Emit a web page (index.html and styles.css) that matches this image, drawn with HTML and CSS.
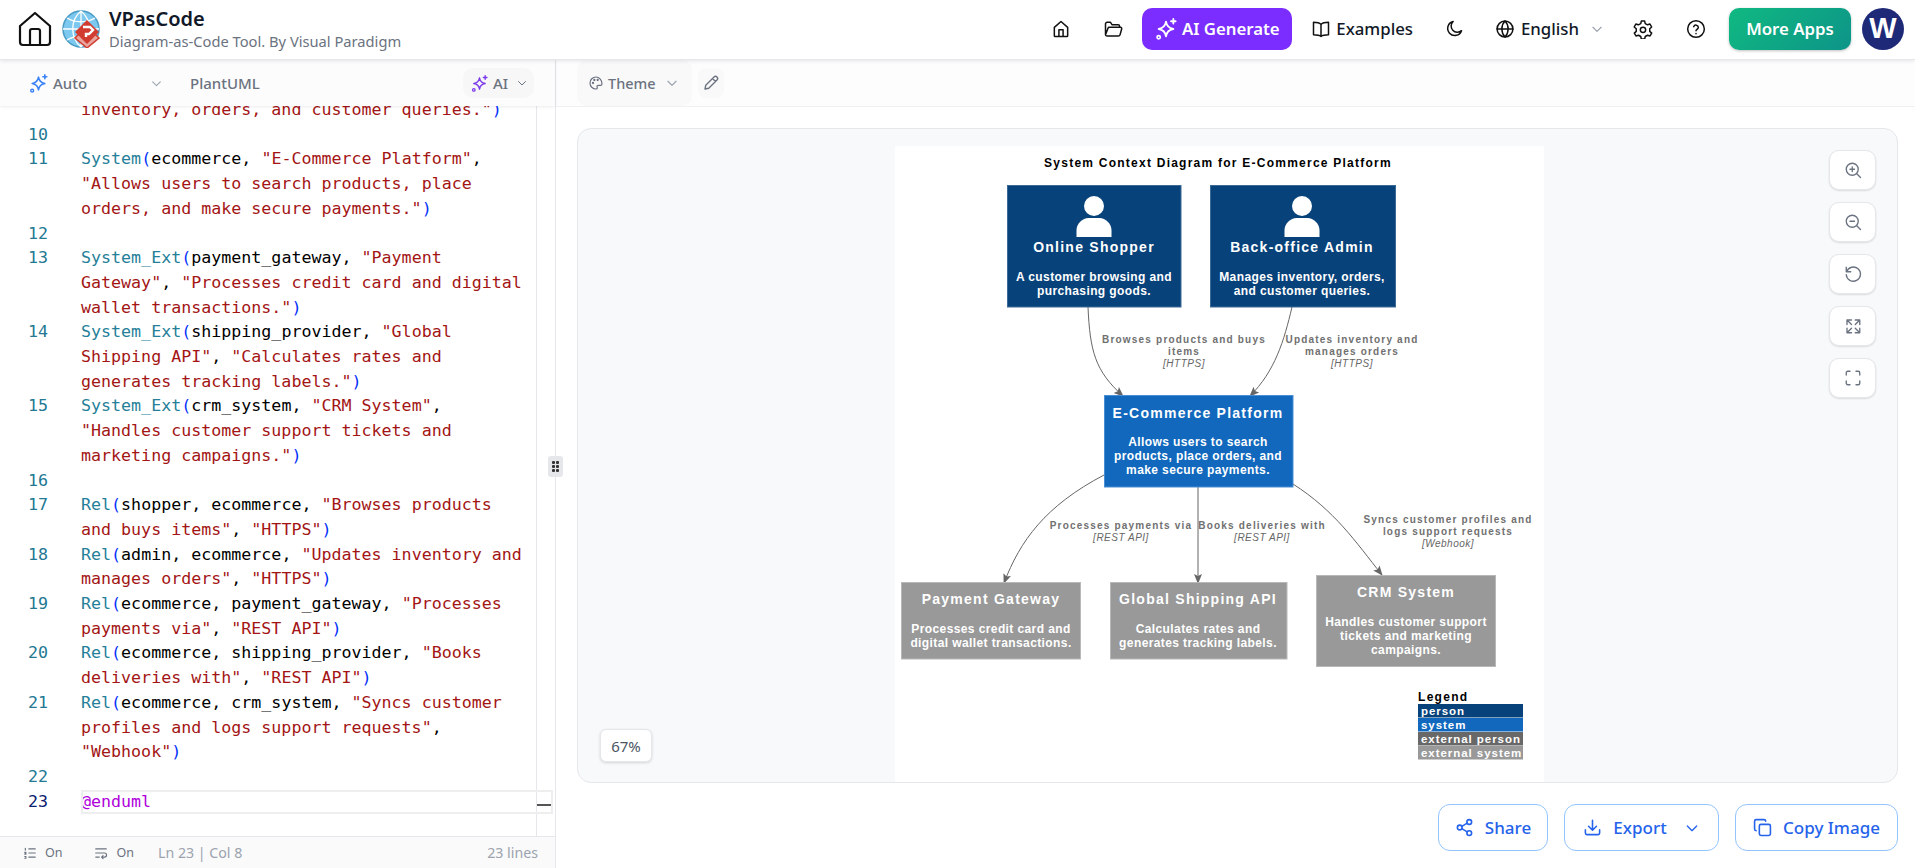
FILE: index.html
```html
<!DOCTYPE html>
<html lang="en">
<head>
<meta charset="UTF-8">
<meta name="viewport" content="width=device-width, initial-scale=1.0">
<title>VPasCode</title>
<link rel="stylesheet" href="styles.css">
</head>
<body>
<svg class="defs" width="0" height="0">
    <symbol id="sparkle" viewBox="0 0 24 24"><path d="M12 4c.8 4.800 3 7.200 8 8-5 .8-7.200 3.200-8 8-.8-4.800-3-7.200-8-8 5-.8 7.200-3.200 8-8z" fill="none" stroke="currentColor" stroke-width="2" stroke-linejoin="round"/><path d="M20 1v5M17.500 3.500h5" fill="none" stroke="currentColor" stroke-width="2" stroke-linecap="round"/><circle cx="4" cy="21" r="1.800" fill="none" stroke="currentColor" stroke-width="1.800"/></symbol>
    <symbol id="chevron" viewBox="0 0 24 24"><path d="M5 9l7 7 7-7" fill="none" stroke="currentColor" stroke-width="2" stroke-linecap="round" stroke-linejoin="round"/></symbol>
</svg>

<header class="topbar">
    <div class="brand">
        <svg class="brand-home" viewBox="0 0 34 36"><path d="M2 15L17 2l15 13v16a3 3 0 0 1-3 3H5a3 3 0 0 1-3-3z M12 34V20a2 2 0 0 1 2-2h6a2 2 0 0 1 2 2v14" fill="none" stroke="#111" stroke-width="2.200" stroke-linejoin="round"/></svg>
        <svg class="brand-logo" viewBox="0 0 38 38">
            <circle cx="19" cy="19" r="18" fill="#7cc8ee" stroke="#4a9cc4" stroke-width="1.500"/>
            <path d="M1 19h36M19 1v36M5 8c8 5 20 5 28 0M5 30c8-5 20-5 28 0M19 1c-11 9-11 27 0 36M19 1c11 9 11 27 0 36" fill="none" stroke="#fff" stroke-width="1.300"/>
            <path d="M25 16l12 12-12 10-12-10z" fill="#e8a59d" stroke="#d23c30" stroke-width="1.500"/>
            <path d="M25 10l12 12-12 12-12-12z" fill="#d23c30"/>
            <path d="M21 17h7l3 3-4 4h-3v3" fill="none" stroke="#fff" stroke-width="2.400"/>
        </svg>
        <div class="brand-text">
            <div class="brand-name">VPasCode</div>
            <div class="brand-sub">Diagram-as-Code Tool. By Visual Paradigm</div>
        </div>
    </div>
    <nav class="nav">
        <span class="nav-icon nav-home"><svg viewBox="0 0 24 24"><path d="M4 10l8-7 8 7v10a1 1 0 0 1-1 1H5a1 1 0 0 1-1-1z M9.500 21v-8h5v8"/></svg></span>
        <span class="nav-icon nav-folder"><svg viewBox="0 0 24 24"><path d="M3 19V6a2 2 0 0 1 2-2h4l2 3h7a2 2 0 0 1 2 2v1 M3 19l3-8a1.500 1.500 0 0 1 1.400-1H21a1.500 1.500 0 0 1 1.400 2l-2 7a2 2 0 0 1-2 1.500H5a2 2 0 0 1-2-1.500z"/></svg></span>
        <span class="btn-ai"><svg><use href="#sparkle"/></svg>AI Generate</span>
        <span class="nav-link nav-examples"><svg viewBox="0 0 24 24"><path d="M12 6.500C10 4.500 7 4 3 4v15c4 0 7 .5 9 2 2-1.500 5-2 9-2V4c-4 0-7 .5-9 2.500z M12 6.500V21"/></svg>Examples</span>
        <span class="nav-icon nav-moon"><svg viewBox="0 0 24 24"><path d="M11 3a8.500 8.500 0 1 0 10 11 7 7 0 0 1-10-11z"/></svg></span>
        <span class="nav-link nav-lang"><svg viewBox="0 0 24 24"><circle cx="12" cy="12" r="9.500"/><path d="M2.500 12h19M12 2.500c-5 5-5 14 0 19M12 2.500c5 5 5 14 0 19"/></svg>English<svg class="lang-chevron"><use href="#chevron"/></svg></span>
        <span class="nav-icon nav-gear"><svg viewBox="0 0 24 24"><path d="M10 2.500h4l.7 3 2.700 1.500 3-.9 2 3.500-2.300 2.100v3.100l2.300 2.100-2 3.500-3-.9-2.700 1.500-.7 3h-4l-.7-3-2.700-1.500-3 .9-2-3.500 2.300-2.100v-3.100L1.400 9.600l2-3.500 3 .9L9.300 5.500z"/><circle cx="12" cy="13" r="3.200"/></svg></span>
        <span class="nav-icon nav-help"><svg viewBox="0 0 24 24"><circle cx="12" cy="12" r="10"/><path d="M9.200 9.200a2.900 2.900 0 0 1 5.600 1c0 2-2.800 2.500-2.800 4"/><path d="M12 17.500v.100"/></svg></span>
        <span class="btn-apps">More Apps</span>
        <span class="avatar">W</span>
    </nav>
</header>

<main class="workspace">
    <section class="editor">
        <div class="editor-bar">
            <svg class="auto-icon"><use href="#sparkle"/></svg>
            <span class="auto-label">Auto</span>
            <svg class="auto-chevron"><use href="#chevron"/></svg>
            <span class="lang-label">PlantUML</span>
            <span class="ai-pill"><svg class="ai-icon"><use href="#sparkle"/></svg>AI<svg class="ai-chevron"><use href="#chevron"/></svg></span>
        </div>
        <div class="code">
            <div class="code-scroll">
                <div class="line"><span class="num"></span><span class="txt"><i class="s">inventory, orders, and customer queries."</i><i class="p">)</i></span></div>
                <div class="line"><span class="num">10</span><span class="txt"></span></div>
                <div class="line"><span class="num">11</span><span class="txt"><i class="k">System</i><i class="p">(</i>ecommerce, <i class="s">"E-Commerce Platform"</i>,<br><i class="s">"Allows users to search products, place<br>orders, and make secure payments."</i><i class="p">)</i></span></div>
                <div class="line"><span class="num">12</span><span class="txt"></span></div>
                <div class="line"><span class="num">13</span><span class="txt"><i class="k">System_Ext</i><i class="p">(</i>payment_gateway, <i class="s">"Payment<br>Gateway"</i>, <i class="s">"Processes credit card and digital<br>wallet transactions."</i><i class="p">)</i></span></div>
                <div class="line"><span class="num">14</span><span class="txt"><i class="k">System_Ext</i><i class="p">(</i>shipping_provider, <i class="s">"Global<br>Shipping API"</i>, <i class="s">"Calculates rates and<br>generates tracking labels."</i><i class="p">)</i></span></div>
                <div class="line"><span class="num">15</span><span class="txt"><i class="k">System_Ext</i><i class="p">(</i>crm_system, <i class="s">"CRM System"</i>,<br><i class="s">"Handles customer support tickets and<br>marketing campaigns."</i><i class="p">)</i></span></div>
                <div class="line"><span class="num">16</span><span class="txt"></span></div>
                <div class="line"><span class="num">17</span><span class="txt"><i class="k">Rel</i><i class="p">(</i>shopper, ecommerce, <i class="s">"Browses products<br>and buys items"</i>, <i class="s">"HTTPS"</i><i class="p">)</i></span></div>
                <div class="line"><span class="num">18</span><span class="txt"><i class="k">Rel</i><i class="p">(</i>admin, ecommerce, <i class="s">"Updates inventory and<br>manages orders"</i>, <i class="s">"HTTPS"</i><i class="p">)</i></span></div>
                <div class="line"><span class="num">19</span><span class="txt"><i class="k">Rel</i><i class="p">(</i>ecommerce, payment_gateway, <i class="s">"Processes<br>payments via"</i>, <i class="s">"REST API"</i><i class="p">)</i></span></div>
                <div class="line"><span class="num">20</span><span class="txt"><i class="k">Rel</i><i class="p">(</i>ecommerce, shipping_provider, <i class="s">"Books<br>deliveries with"</i>, <i class="s">"REST API"</i><i class="p">)</i></span></div>
                <div class="line"><span class="num">21</span><span class="txt"><i class="k">Rel</i><i class="p">(</i>ecommerce, crm_system, <i class="s">"Syncs customer<br>profiles and logs support requests"</i>,<br><i class="s">"Webhook"</i><i class="p">)</i></span></div>
                <div class="line"><span class="num">22</span><span class="txt"></span></div>
                <div class="line line-current"><span class="num">23</span><span class="txt"><i class="d">@enduml</i></span></div>
            </div>
            <div class="ruler"><span class="ruler-mark"></span></div>
        </div>
        <div class="status">
            <svg class="status-icon" viewBox="0 0 24 24"><path d="M10 5h11M10 12h11M10 19h11M4 4v3M3 11h2v1l-2 2h2M3 18h2v3H3"/></svg>
            <span class="status-on">On</span>
            <svg class="status-icon status-wrap" viewBox="0 0 24 24"><path d="M3 5h18M3 12h15a3 3 0 0 1 0 7h-5M15.500 16.500L13 19l2.500 2.500M3 19h6"/></svg>
            <span class="status-on">On</span>
            <span class="status-pos">Ln 23 | Col 8</span>
            <span class="status-lines">23 lines</span>
        </div>
    </section>

    <section class="preview">
        <div class="preview-bar">
            <span class="theme-btn"><svg viewBox="0 0 24 24"><path d="M12 3a9 9 0 1 0 0 18c1.500 0 2-1 2-2s-1-1.500-.5-2.500 1.500-1 3-1H19a2.500 2.500 0 0 0 2-2.500c0-5-4-10-9-10z"/><circle cx="7.500" cy="12" r=".8"/><circle cx="9.500" cy="7.500" r=".8"/><circle cx="14.500" cy="7.500" r=".8"/></svg>Theme<svg class="theme-chevron"><use href="#chevron"/></svg></span>
            <span class="pencil-btn"><svg class="pencil" viewBox="0 0 24 24"><path d="M4 20l1-5L16 4a2.100 2.100 0 0 1 4 4L9 19z M14 6l4 4"/></svg></span>
        </div>
        <div class="canvas-wrap">
            <div class="canvas">
                <svg class="diagram" viewBox="0 0 649 637">
                    <defs>
                        <marker id="arrow" viewBox="0 0 10 10" refX="9" refY="5" markerWidth="10" markerHeight="10" orient="auto"><path d="M0 1l10 4-10 4 2-4z" fill="#666"/></marker>
                    </defs>
                    <text class="d-title" x="323" y="21">System Context Diagram for E-Commerce Platform</text>

                    <g class="edges">
                        <path d="M193 161C195 205 200 225 228 250" marker-end="url(#arrow)"/>
                        <path d="M397 161C389 195 380 225 355 250" marker-end="url(#arrow)"/>
                        <path d="M209 329C150 360 125 395 109 437" marker-end="url(#arrow)"/>
                        <path d="M303 341V437" marker-end="url(#arrow)"/>
                        <path d="M398 338C440 365 460 395 487 429" marker-end="url(#arrow)"/>
                    </g>

                    <rect class="b-person" x="112.500" y="39.500" width="173.500" height="121.500"/>
                    <rect class="b-person" x="315.500" y="39.500" width="185" height="121.500"/>
                    <rect class="b-system" x="209.500" y="249.500" width="188.500" height="91.500"/>
                    <rect class="b-ext" x="6.500" y="436.500" width="179" height="76.500"/>
                    <rect class="b-ext" x="215.500" y="436.500" width="176.500" height="76.500"/>
                    <rect class="b-ext" x="421.500" y="429.500" width="179" height="91"/>

                    <circle class="person" cx="199" cy="60" r="10"/>
                    <path class="person" d="M181.500 91V84c0-6 6-12 12-12h11c6 0 12 6 12 12v7z"/>
                    <circle class="person" cx="407" cy="60" r="10"/>
                    <path class="person" d="M389.500 91V84c0-6 6-12 12-12h11c6 0 12 6 12 12v7z"/>

                    <text class="d-name" x="199" y="106">Online Shopper</text>
                    <text class="d-desc" x="199" y="135">A customer browsing and</text>
                    <text class="d-desc" x="199" y="149">purchasing goods.</text>

                    <text class="d-name" x="407" y="106">Back-office Admin</text>
                    <text class="d-desc" x="407" y="135">Manages inventory, orders,</text>
                    <text class="d-desc" x="407" y="149">and customer queries.</text>

                    <text class="d-name" x="303" y="272">E-Commerce Platform</text>
                    <text class="d-desc" x="303" y="300">Allows users to search</text>
                    <text class="d-desc" x="303" y="314">products, place orders, and</text>
                    <text class="d-desc" x="303" y="328">make secure payments.</text>

                    <text class="d-name" x="96" y="458">Payment Gateway</text>
                    <text class="d-desc" x="96" y="487">Processes credit card and</text>
                    <text class="d-desc" x="96" y="501">digital wallet transactions.</text>

                    <text class="d-name" x="303" y="458">Global Shipping API</text>
                    <text class="d-desc" x="303" y="487">Calculates rates and</text>
                    <text class="d-desc" x="303" y="501">generates tracking labels.</text>

                    <text class="d-name" x="511" y="451">CRM System</text>
                    <text class="d-desc" x="511" y="480">Handles customer support</text>
                    <text class="d-desc" x="511" y="494">tickets and marketing</text>
                    <text class="d-desc" x="511" y="508">campaigns.</text>

                    <text class="d-edge" x="289" y="197">Browses products and buys</text>
                    <text class="d-edge" x="289" y="209">items</text>
                    <text class="d-tech" x="289" y="221">[HTTPS]</text>

                    <text class="d-edge" x="457" y="197">Updates inventory and</text>
                    <text class="d-edge" x="457" y="209">manages orders</text>
                    <text class="d-tech" x="457" y="221">[HTTPS]</text>

                    <text class="d-edge" x="226" y="383">Processes payments via</text>
                    <text class="d-tech" x="226" y="395">[REST API]</text>

                    <text class="d-edge" x="367" y="383">Books deliveries with</text>
                    <text class="d-tech" x="367" y="395">[REST API]</text>

                    <text class="d-edge" x="553" y="377">Syncs customer profiles and</text>
                    <text class="d-edge" x="553" y="389">logs support requests</text>
                    <text class="d-tech" x="553" y="401">[Webhook]</text>

                    <text class="d-legend" x="523" y="555">Legend</text>
                    <rect x="523" y="558" width="105" height="13.500" fill="#08427b"/>
                    <rect x="523" y="572" width="105" height="13.500" fill="#1168bd"/>
                    <rect x="523" y="586" width="105" height="13.500" fill="#686868"/>
                    <rect x="523" y="600" width="105" height="13.500" fill="#999"/>
                    <text class="d-key" x="526" y="569">person</text>
                    <text class="d-key" x="526" y="583">system</text>
                    <text class="d-key" x="526" y="597">external person</text>
                    <text class="d-key" x="526" y="611">external system</text>
                </svg>
                <div class="zoom-tools">
                    <span class="tool"><svg viewBox="0 0 24 24"><circle cx="11" cy="11" r="8"/><path d="M8 11h6M11 8v6M17 17l5 5"/></svg></span>
                    <span class="tool"><svg viewBox="0 0 24 24"><circle cx="11" cy="11" r="8"/><path d="M8 11h6M17 17l5 5"/></svg></span>
                    <span class="tool"><svg viewBox="0 0 24 24"><path d="M3 3v6h6M3.500 9A9.500 9.500 0 1 1 3 13"/></svg></span>
                    <span class="tool"><svg viewBox="0 0 24 24"><path d="M4 10V4h6M4 4l6 6M15 4h6v6M21 4l-6 6M4 15v6h6M4 21l6-6M15 21h6v-6M21 21l-6-6"/></svg></span>
                    <span class="tool"><svg viewBox="0 0 24 24"><path d="M3 8V5a2 2 0 0 1 2-2h3M16 3h3a2 2 0 0 1 2 2v3M21 16v3a2 2 0 0 1-2 2h-3M8 21H5a2 2 0 0 1-2-2v-3"/></svg></span>
                </div>
                <span class="zoom-pct">67%</span>
            </div>
        </div>
        <div class="actions">
            <span class="action action-share"><svg viewBox="0 0 24 24"><circle cx="18" cy="5" r="3"/><circle cx="6" cy="12" r="3"/><circle cx="18" cy="19" r="3"/><path d="M8.600 10.500l6.800-4M8.600 13.500l6.800 4"/></svg>Share</span>
            <span class="action action-export"><svg viewBox="0 0 24 24"><path d="M12 3v12M7 10.500l5 5 5-5M3 15v4a2 2 0 0 0 2 2h14a2 2 0 0 0 2-2v-4"/></svg>Export<svg class="export-chevron"><use href="#chevron"/></svg></span>
            <span class="action action-copy"><svg viewBox="0 0 24 24"><rect x="8" y="8" width="14" height="14" rx="2"/><path d="M4 16a2 2 0 0 1-2-2V4a2 2 0 0 1 2-2h10a2 2 0 0 1 2 2"/></svg>Copy Image</span>
        </div>
    </section>
    <span class="splitter"><i></i><i></i><i></i><i></i><i></i><i></i></span>
</main>
</body>
</html>
```

FILE: styles.css
```css
* {
    box-sizing: border-box;
}

html, body {
    margin: 0;
    height: 100%;
    overflow: hidden;
}

body {
    font-family: "Noto Sans", Arial, sans-serif;
    background-color: #fff;
    color: #111827;
    display: flex;
    flex-direction: column;
}

.defs {
    position: absolute;
}

/* top bar */
.topbar {
    height: 60px;
    flex: none;
    display: flex;
    align-items: center;
    justify-content: space-between;
    border-bottom: 1px solid #e5e7eb;
    box-shadow: 0 1px 4px rgba(0, 0, 0, 0.1);
    position: relative;
    z-index: 2;
    background-color: #fff;
    padding: 0 11px 2px 18px;
}

.brand {
    display: flex;
    align-items: center;
}

.brand-home {
    width: 34px;
    height: 36px;
    margin-right: 10px;
}

.brand-logo {
    width: 38px;
    height: 38px;
    margin-right: 9px;
}

.brand-name {
    font-size: 20px;
    font-weight: 600;
    line-height: 25px;
    color: #111827;
}

.brand-sub {
    font-size: 14.700px;
    line-height: 20px;
    color: #6b7280;
}

.nav {
    display: flex;
    align-items: center;
}

.nav svg {
    fill: none;
    stroke: #111;
    stroke-width: 1.8;
    stroke-linecap: round;
    stroke-linejoin: round;
}

.nav-icon {
    display: flex;
}

.nav-icon svg {
    width: 20px;
    height: 20px;
}

.nav-home {
    margin-right: 32px;
}

.nav-folder {
    margin-right: 19px;
}

.btn-ai {
    width: 150px;
    height: 42px;
    display: flex;
    align-items: center;
    justify-content: center;
    gap: 5px;
    border-radius: 10px;
    background-color: #7b2cff;
    color: #fff;
    font-size: 16.800px;
    font-weight: 600;
    margin-right: 19px;
}

.nav .btn-ai svg {
    width: 22px;
    height: 24px;
    stroke: none;
    color: #fff;
}

.nav-link {
    display: flex;
    align-items: center;
    font-size: 16.800px;
    font-weight: 500;
    color: #111827;
}

.nav-link svg {
    width: 20px;
    height: 20px;
    margin-right: 5px;
}

.nav-examples {
    margin-right: 31px;
}

.nav-moon {
    margin-right: 31px;
}

.nav-lang {
    margin-right: 29px;
}

.nav-lang svg {
    margin-right: 6px;
}

.nav .lang-chevron {
    width: 14px;
    height: 14px;
    margin: 0 0 0 11px;
    color: #9ca3af;
    stroke: none;
}

.nav-gear {
    margin-right: 33px;
}

.nav-help {
    margin-right: 23px;
}

.btn-apps {
    width: 122px;
    height: 42px;
    display: flex;
    align-items: center;
    justify-content: center;
    border-radius: 10px;
    background: linear-gradient(135deg, #10b981, #0d9488);
    box-shadow: 0 1px 3px rgba(0, 0, 0, 0.25);
    color: #fff;
    font-size: 16.800px;
    font-weight: 600;
    margin-right: 11px;
}

.avatar {
    width: 42px;
    height: 42px;
    border-radius: 50%;
    background-color: #1e2a78;
    color: #fff;
    display: flex;
    align-items: center;
    justify-content: center;
    font-family: "Liberation Sans", Arial, sans-serif;
    font-size: 29px;
    font-weight: 700;
}

.workspace {
    flex: 1;
    min-height: 0;
    display: flex;
    position: relative;
}

/* editor */
.editor {
    width: 556px;
    flex: none;
    display: flex;
    flex-direction: column;
    border-right: 1px solid #e5e7eb;
}

.editor-bar {
    height: 46px;
    flex: none;
    display: flex;
    align-items: center;
    padding: 0 21px 0 29px;
    background-color: #fcfcfc;
    color: #6b7280;
    font-size: 15px;
    font-weight: 500;
    box-shadow: 0 1px 3px rgba(0, 0, 0, 0.08);
    position: relative;
    z-index: 1;
}

.editor-bar svg {
    flex: none;
}

.auto-icon {
    width: 19px;
    height: 21px;
    color: #3b82f6;
    margin-right: 5px;
}

.auto-label {
    width: 97px;
}

.auto-chevron {
    width: 13px;
    height: 13px;
    color: #9ca3af;
    margin-right: 27px;
}

.ai-pill {
    margin-left: auto;
    width: 71px;
    height: 30px;
    display: flex;
    align-items: center;
    padding-left: 8px;
    border-radius: 10px;
    background-color: #f7f7f8;
}

.ai-icon {
    width: 17px;
    height: 19px;
    color: #7c3aed;
    margin-right: 5px;
}

.ai-chevron {
    width: 12px;
    height: 12px;
    margin-left: 8px;
}

.code {
    flex: 1;
    min-height: 0;
    display: flex;
    overflow: hidden;
}

.code-scroll {
    flex: 1;
    margin-top: -8px;
    font-family: "DejaVu Sans Mono", "Liberation Mono", monospace;
    font-size: 16.650px;
    line-height: 24.700px;
    color: #000;
}

.line {
    display: flex;
}

.num {
    width: 81px;
    flex: none;
    padding-left: 28px;
    color: #237893;
}

.txt {
    flex: 1;
    min-height: 24.700px;
}

.txt i {
    font-style: normal;
}

.k {
    color: #267f99;
}

.p {
    color: #0431fa;
}

.s {
    color: #a31515;
}

.d {
    color: #af00db;
}

.line-current .num {
    color: #0b216f;
}

.line-current .txt {
    outline: 2px solid #eeeeee;
    outline-offset: -2px;
    margin-right: -17px;
    position: relative;
    z-index: 1;
}

.ruler {
    width: 19px;
    flex: none;
    border-left: 1px solid #e5e7eb;
    position: relative;
}

.ruler-mark {
    position: absolute;
    left: 0;
    right: 2px;
    top: 698px;
    height: 2px;
    background-color: #555;
}

.status {
    height: 32px;
    flex: none;
    display: flex;
    align-items: center;
    padding: 0 17px 0 23px;
    border-top: 1px solid #e5e7eb;
    background-color: #fafafa;
    color: #6b7280;
    font-size: 14.200px;
}

.status-icon {
    width: 14px;
    height: 14px;
    fill: none;
    stroke: #6b7280;
    stroke-width: 2;
    stroke-linecap: round;
    stroke-linejoin: round;
    margin-right: 8px;
}

.status-wrap {
    margin-left: 31px;
    margin-right: 9px;
}

.status-on {
    font-size: 12.500px;
}

.status-pos {
    margin-left: 24px;
    color: #9ca3af;
}

.status-lines {
    margin-left: auto;
    color: #9ca3af;
}

/* preview */
.preview {
    flex: 1;
    min-width: 0;
    display: flex;
    flex-direction: column;
}

.preview-bar {
    height: 47px;
    flex: none;
    display: flex;
    align-items: center;
    padding-left: 21px;
    background-color: #fdfdfd;
    border-bottom: 1px solid #f0f0f0;
}

.theme-btn {
    width: 115px;
    height: 46px;
    display: flex;
    align-items: center;
    padding-left: 11px;
    background-color: #f9f9fa;
    color: #6b7280;
    font-size: 14.500px;
    font-weight: 500;
    border-radius: 10px;
}

.theme-btn svg,
.pencil {
    fill: none;
    stroke: #6b7280;
    stroke-width: 1.8;
    stroke-linecap: round;
    stroke-linejoin: round;
}

.theme-btn svg {
    width: 16px;
    height: 16px;
    margin-right: 4px;
}

.theme-btn .theme-chevron {
    width: 14px;
    height: 14px;
    margin: 0 0 0 9px;
    stroke: none;
    color: #9ca3af;
}

.pencil-btn {
    width: 26px;
    height: 30px;
    margin-left: 6px;
    display: flex;
    align-items: center;
    justify-content: center;
    background-color: #f9f9fa;
    border-radius: 8px;
}

.pencil {
    width: 18px;
    height: 18px;
}

.canvas-wrap {
    flex: 1;
    min-height: 0;
    padding: 21px 17px 0 21px;
}

.canvas {
    height: 100%;
    border: 1px solid #e5e7eb;
    border-radius: 14px;
    background-color: #f8f9fb;
    position: relative;
    overflow: hidden;
    padding: 17px 0 0 317px;
}

.diagram {
    display: block;
    width: 649px;
    height: 637px;
    background-color: #fff;
}

.diagram text {
    font-family: "Liberation Sans", Arial, sans-serif;
    text-anchor: middle;
}

.d-title {
    font-size: 12px;
    font-weight: 700;
    letter-spacing: 1.240px;
    fill: #000;
}

.edges path {
    fill: none;
    stroke: #666;
    stroke-width: 1;
}

.b-person {
    fill: #08427b;
    stroke: #3c6a97;
}

.b-system {
    fill: #1168bd;
    stroke: #4a8fd3;
}

.b-ext {
    fill: #999;
    stroke: #b8b8b8;
}

.person {
    fill: #fff;
}

.d-name {
    font-size: 14px;
    font-weight: 700;
    letter-spacing: 1.250px;
    fill: #fff;
}

.d-desc {
    font-size: 12px;
    font-weight: 700;
    letter-spacing: 0.400px;
    fill: #fff;
}

.d-edge {
    font-size: 10px;
    font-weight: 700;
    letter-spacing: 1.200px;
    fill: #707070;
}

.d-tech {
    font-size: 10px;
    font-style: italic;
    letter-spacing: 0.500px;
    fill: #666;
}

.diagram .d-legend,
.diagram .d-key {
    text-anchor: start;
}

.d-legend {
    font-size: 12px;
    font-weight: 700;
    letter-spacing: 1.300px;
    fill: #000;
}

.d-key {
    font-size: 11.500px;
    font-weight: 700;
    letter-spacing: 0.950px;
    fill: #fff;
}

.zoom-tools {
    position: absolute;
    top: 21px;
    right: 21px;
    display: flex;
    flex-direction: column;
    gap: 12px;
}

.tool {
    width: 47px;
    height: 40px;
    display: flex;
    align-items: center;
    justify-content: center;
    background-color: #fff;
    border: 1px solid #e5e7eb;
    border-radius: 10px;
    box-shadow: 0 1px 2px rgba(0, 0, 0, 0.12);
}

.tool svg {
    width: 18px;
    height: 18px;
    fill: none;
    stroke: #6b7280;
    stroke-width: 1.8;
    stroke-linecap: round;
    stroke-linejoin: round;
}

.zoom-pct {
    position: absolute;
    left: 22px;
    bottom: 20px;
    width: 52px;
    height: 33px;
    display: flex;
    align-items: center;
    justify-content: center;
    background-color: #fff;
    border: 1px solid #e5e7eb;
    border-radius: 6px;
    box-shadow: 0 1px 3px rgba(0, 0, 0, 0.15);
    font-size: 15px;
    color: #4b5563;
}

.actions {
    flex: none;
    height: 85px;
    display: flex;
    justify-content: flex-end;
    align-items: flex-start;
    gap: 16px;
    padding: 21px 17px 0 0;
}

.action {
    height: 47px;
    display: flex;
    align-items: center;
    justify-content: center;
    border: 1px solid #93c5fd;
    border-radius: 12px;
    color: #2563eb;
    font-size: 17px;
    font-weight: 500;
    background-color: #fff;
}

.action svg {
    width: 19px;
    height: 19px;
    fill: none;
    stroke: #2563eb;
    stroke-width: 2;
    stroke-linecap: round;
    stroke-linejoin: round;
    margin-right: 11px;
}

.action-share {
    width: 110px;
}

.action-export {
    width: 155px;
}

.action .export-chevron {
    width: 16px;
    height: 16px;
    margin: 0 0 0 17px;
    stroke: none;
}

.action-copy {
    width: 163px;
}

.splitter {
    position: absolute;
    left: 548px;
    top: 396px;
    width: 15px;
    height: 21px;
    display: grid;
    grid-template-columns: 3px 3px;
    grid-auto-rows: 3px;
    gap: 1px;
    justify-content: center;
    align-content: center;
    background-color: #e5e7eb;
    border-radius: 3px;
    z-index: 3;
}

.splitter i {
    background-color: #333;
    border-radius: 1px;
}
```
